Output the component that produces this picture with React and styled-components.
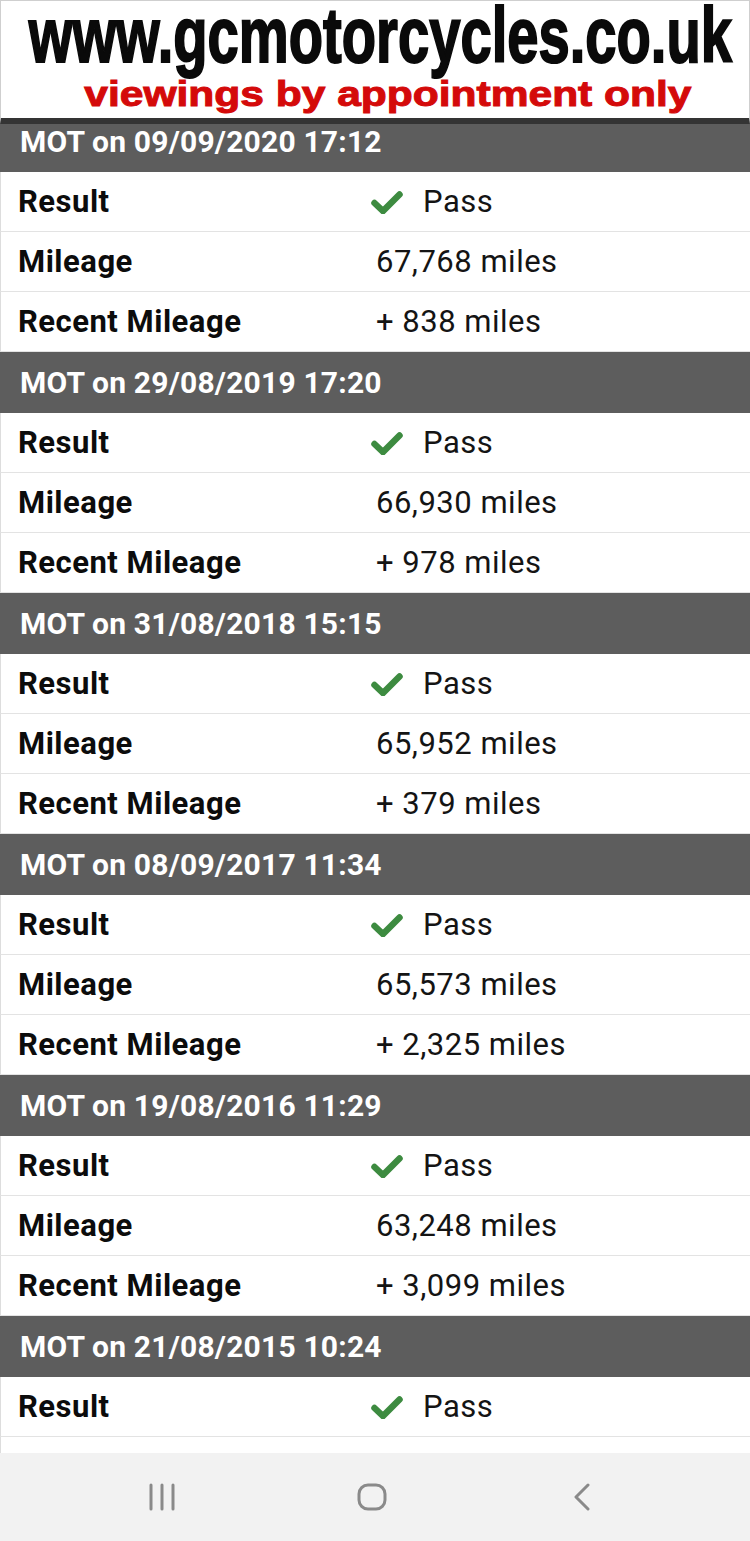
import React from 'react';
import styled, { createGlobalStyle } from 'styled-components';

const GlobalStyle = createGlobalStyle`
  html, body {
    margin: 0;
    padding: 0;
    background: #ffffff;
  }
  * {
    box-sizing: border-box;
  }
`

const Screen = styled.div`
  width: 750px;
  height: 1541px;
  display: flex;
  flex-direction: column;
  overflow: hidden;
  background: #ffffff;
  font-family: Roboto, "Liberation Sans", sans-serif;
`

const Banner = styled.header`
  flex: none;
  position: relative;
  z-index: 2;
  height: 124px;
  background: #ffffff;
  border: 1px solid #cfcfcf;
  border-bottom: 6px solid #343434;
  display: flex;
  flex-direction: column;
  align-items: center;
  overflow: hidden;
`

const SiteName = styled.div`
  display: inline-block;
  margin: -1px 0 0 11px;
  font-family: "Liberation Sans", Arial, sans-serif;
  font-weight: 700;
  font-size: 78px;
  line-height: 70px;
  color: #0a0a0a;
  white-space: nowrap;
  -webkit-text-stroke: 2px #0a0a0a;
  transform: scaleX(0.72);
`

const Tagline = styled.div`
  display: inline-block;
  margin: 4px 0 0 25px;
  font-family: "Liberation Sans", Arial, sans-serif;
  font-weight: 700;
  font-size: 35px;
  line-height: 40px;
  color: #d40a0a;
  white-space: nowrap;
  -webkit-text-stroke: 1px #d40a0a;
  transform: scaleX(1.215);
`

const List = styled.main`
  flex: 1;
  margin-top: -13px;
  overflow: hidden;
`

const SectionHeader = styled.div`
  height: 61px;
  display: flex;
  align-items: center;
  padding-left: 20px;
  background: #5d5d5d;
  color: #ffffff;
  font-weight: 700;
  font-size: 30px;
  letter-spacing: 0.2px;
`

const Row = styled.div`
  height: 60px;
  display: grid;
  grid-template-columns: 358px 1fr;
  align-items: center;
  padding-left: 17px;
  border-left: 1px solid #dddddd;
  border-bottom: 1px solid #e3e3e3;
  font-size: 31px;
  letter-spacing: 0.5px;
  color: #141414;
`

const Label = styled.span`
  font-weight: 700;
  color: #0c0c0c;
`

const Value = styled.span`
  display: flex;
  align-items: center;
  gap: 20px;
  font-weight: 400;
`

const CheckIcon = styled.svg`
  width: 32px;
  height: 24px;
  margin-left: -5px;
  flex: none;
`

const NavBar = styled.nav`
  flex: none;
  height: 88px;
  background: #f2f2f2;
  display: grid;
  grid-template-columns: repeat(3, 210px);
  justify-content: center;
  justify-items: center;
  align-items: center;
  padding-right: 6px;
`

const NavIcon = styled.svg`
  height: 28px;
  width: ${p => p.$w}px;
  color: #8a8a8a;
`

const mots = [
  { date: '09/09/2020 17:12', mileage: '67,768', recent: '838' },
  { date: '29/08/2019 17:20', mileage: '66,930', recent: '978' },
  { date: '31/08/2018 15:15', mileage: '65,952', recent: '379' },
  { date: '08/09/2017 11:34', mileage: '65,573', recent: '2,325' },
  { date: '19/08/2016 11:29', mileage: '63,248', recent: '3,099' },
  { date: '21/08/2015 10:24', mileage: '60,149', recent: '1,402' },
]

const Check = () => (
  <CheckIcon viewBox="0 0 32 24">
    <path d="M3.5 13 L12 21 L28.5 4.5" fill="none" stroke="#3d8b40" strokeWidth="6.5" strokeLinejoin="miter" strokeLinecap="round" />
  </CheckIcon>
)

const MotSection = ({ mot }) => (
  <section>
    <SectionHeader>MOT on {mot.date}</SectionHeader>
    <Row>
      <Label>Result</Label>
      <Value><Check />Pass</Value>
    </Row>
    <Row>
      <Label>Mileage</Label>
      <Value>{mot.mileage} miles</Value>
    </Row>
    <Row>
      <Label>Recent Mileage</Label>
      <Value>+ {mot.recent} miles</Value>
    </Row>
  </section>
)

export default function App() {
  return (
    <>
      <GlobalStyle />
      <Screen>
        <Banner>
          <SiteName>www.gcmotorcycles.co.uk</SiteName>
          <Tagline>viewings by appointment only</Tagline>
        </Banner>
        <List>
          {mots.map(mot => <MotSection key={mot.date} mot={mot} />)}
        </List>
        <NavBar>
          <NavIcon $w={28} viewBox="0 0 28 28">
            <g stroke="currentColor" strokeWidth="3" strokeLinecap="round">
              <line x1="3" y1="2" x2="3" y2="26" />
              <line x1="14" y1="2" x2="14" y2="26" />
              <line x1="25" y1="2" x2="25" y2="26" />
            </g>
          </NavIcon>
          <NavIcon $w={30} viewBox="0 0 30 28">
            <rect x="2" y="2" width="26" height="24" rx="9" fill="none" stroke="currentColor" strokeWidth="3" />
          </NavIcon>
          <NavIcon $w={18} viewBox="0 0 18 28">
            <polyline points="15,2 3,14 15,26" fill="none" stroke="currentColor" strokeWidth="3" strokeLinecap="round" strokeLinejoin="round" />
          </NavIcon>
        </NavBar>
      </Screen>
    </>
  );
}
